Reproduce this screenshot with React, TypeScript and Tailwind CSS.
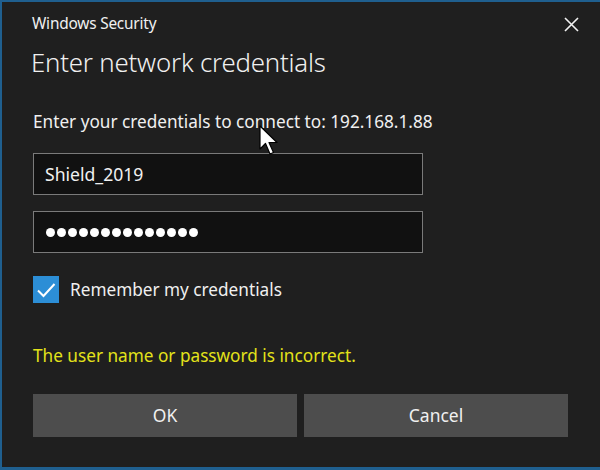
import React from "react";

export default function App() {
  const font = { fontFamily: '"Noto Sans", "Open Sans", sans-serif' };
  return (
    <div
      className="relative w-[600px] h-[470px] bg-[#1f1f1f] border-t-2 border-l-2 border-b-[3px] border-[#1f5f8f] text-[#f0f0f0] overflow-hidden"
      style={font}
    >
      <div className="flex items-center justify-between pl-[30px] pr-[21px] pt-[9px] h-[34px]">
        <span className="text-[15.4px] leading-none tracking-[-0.2px]">Windows Security</span>
        <svg width="15" height="15" viewBox="0 0 15 15" className="mt-[1px]">
          <path d="M1 1 L14 14 M14 1 L1 14" stroke="#f2f2f2" strokeWidth="1.6" />
        </svg>
      </div>
      <div className="pl-[29px] pr-[30px]">
        <div className="mt-[9px] text-[25.8px] leading-[34px] font-light tracking-[-0.2px]">
          Enter network credentials
        </div>
        <div className="mt-[31px] text-[17.2px] leading-[24px] pl-[2px]">
          Enter your credentials to connect to: 192.168.1.88
        </div>
        <div className="mt-[19px] w-[390px] h-[42px] ml-[2px] border border-[#7a7a7a] bg-[#111111] flex items-center pl-[11px] text-[17.6px]">
          Shield_2019
        </div>
        <div className="mt-[16px] w-[390px] h-[42px] ml-[2px] border border-[#7a7a7a] bg-[#111111] flex items-center pl-[12px] gap-[2px]">
          {Array.from({ length: 14 }).map((_, i) => (
            <span key={i} className="block w-[9px] h-[9px] rounded-full bg-white" />
          ))}
        </div>
        <div className="mt-[23px] ml-[2px] flex items-center gap-[11px]">
          <div className="w-[26px] h-[27px] bg-[#2c8ed6] flex items-center justify-center">
            <svg width="20" height="16" viewBox="0 0 20 16">
              <path d="M2 8.5 L7.5 14 L18.5 2" stroke="white" strokeWidth="2" fill="none" />
            </svg>
          </div>
          <span className="text-[17.2px] leading-[24px]">Remember my credentials</span>
        </div>
        <div className="mt-[41px] ml-[2px] text-[17.2px] leading-[24px] text-[#e3e21a]">
          The user name or password is incorrect.
        </div>
        <div className="mt-[26px] ml-[2px] flex gap-[7px]">
          <div className="w-[264px] h-[43px] bg-[#4d4d4d] flex items-center justify-center text-[17.5px]">OK</div>
          <div className="w-[264px] h-[43px] bg-[#4d4d4d] flex items-center justify-center text-[17.5px]">Cancel</div>
        </div>
      </div>
      <svg
        className="absolute left-[257px] top-[123px]"
        width="22"
        height="33"
        viewBox="0 0 22 33"
      >
        <path
          d="M1 1 L1 24 L6.5 18.5 L11 29 L14.5 27.5 L10 17.5 L18 17.5 Z"
          fill="white"
          stroke="black"
          strokeWidth="1.2"
          strokeLinejoin="round"
        />
      </svg>
    </div>
  );
}
